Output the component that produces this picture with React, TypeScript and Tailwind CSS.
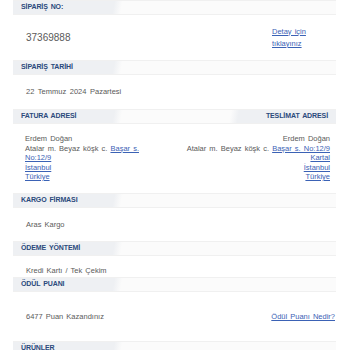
const Header = ({ left, right }: { left: string; right?: string }) => {
  return (
    <div
      className={
        right
          ? "flex h-[15px] items-center justify-between border-y border-[#f0f0f0] px-2 bg-[linear-gradient(100deg,#eef0f3_0,#eef0f3_100px,#fbfbfb_108px,#fbfbfb_215px,#eef0f3_223px,#eef0f3_100%)]"
          : "flex h-[15px] items-center border-y border-[#f0f0f0] px-2 bg-[linear-gradient(100deg,#eef0f3_0,#eef0f3_100px,#fbfbfb_108px,#fbfbfb_100%)]"
      }
    >
      <span className="text-[7px] font-bold tracking-[-0.1px] text-[#2b4a7c]">{left}</span>
      {right && <span className="text-[7px] font-bold tracking-[-0.1px] text-[#2b4a7c]">{right}</span>}
    </div>
  );
};

const link = "text-[#3b62b5] underline";

export default function App() {
  return (
    <div className="w-[350px] h-[350px] overflow-hidden bg-white font-['Liberation_Sans',Arial,sans-serif]">
      <div className="ml-[13px] w-[323px] text-[#5a5a5a] [word-spacing:1px]">
        <Header left="SİPARİŞ NO:" />
        <div className="flex h-[45px] items-center justify-between pl-[13px] pr-[24px]">
          <span className="text-[10px]">37369888</span>
          <a className={`${link} text-[7.5px] leading-[12px] w-[40px]`}>Detay için tıklayınız</a>
        </div>

        <Header left="SİPARİŞ TARİHİ" />
        <div className="flex h-[34px] items-center pl-[13px] text-[7.5px]">
          <span className="[word-spacing:1.5px]">22 Temmuz 2024 Pazartesi</span>
        </div>

        <Header left="FATURA ADRESİ" right="TESLİMAT ADRESİ" />
        <div className="flex h-[69px] justify-between pl-[12px] pr-[6px] pt-[10px] text-[7.5px] leading-[9.5px]">
          <div className="w-[128px]">
            <div>Erdem Doğan</div>
            <div>
              Atalar m. Beyaz köşk c. <a className={link}>Başar s.</a>
            </div>
            <div><a className={link}>No:12/9</a></div>
            <div><a className={link}>İstanbul</a></div>
            <div><a className={link}>Türkiye</a></div>
          </div>
          <div className="text-right">
            <div>Erdem Doğan</div>
            <div>
              Atalar m. Beyaz köşk c. <a className={link}>Başar s. No:12/9</a>
            </div>
            <div><a className={link}>Kartal</a></div>
            <div><a className={link}>İstanbul</a></div>
            <div><a className={link}>Türkiye</a></div>
          </div>
        </div>

        <Header left="KARGO FİRMASI" />
        <div className="flex h-[33px] items-center pl-[13px] text-[7.5px]">Aras Kargo</div>

        <Header left="ÖDEME YÖNTEMİ" />
        <div className="h-[21px] pl-[13px] pt-[10px] text-[7.5px] leading-[10px]">Kredi Kartı / Tek Çekim</div>

        <Header left="ÖDÜL PUANI" />
        <div className="flex h-[49px] items-center justify-between pl-[13px] pr-[1px]">
          <span className="text-[7.5px]">6477 Puan Kazandınız</span>
          <a className={`${link} text-[7.5px]`}>Ödül Puanı Nedir?</a>
        </div>

        <Header left="ÜRÜNLER" />
      </div>
    </div>
  );
}
